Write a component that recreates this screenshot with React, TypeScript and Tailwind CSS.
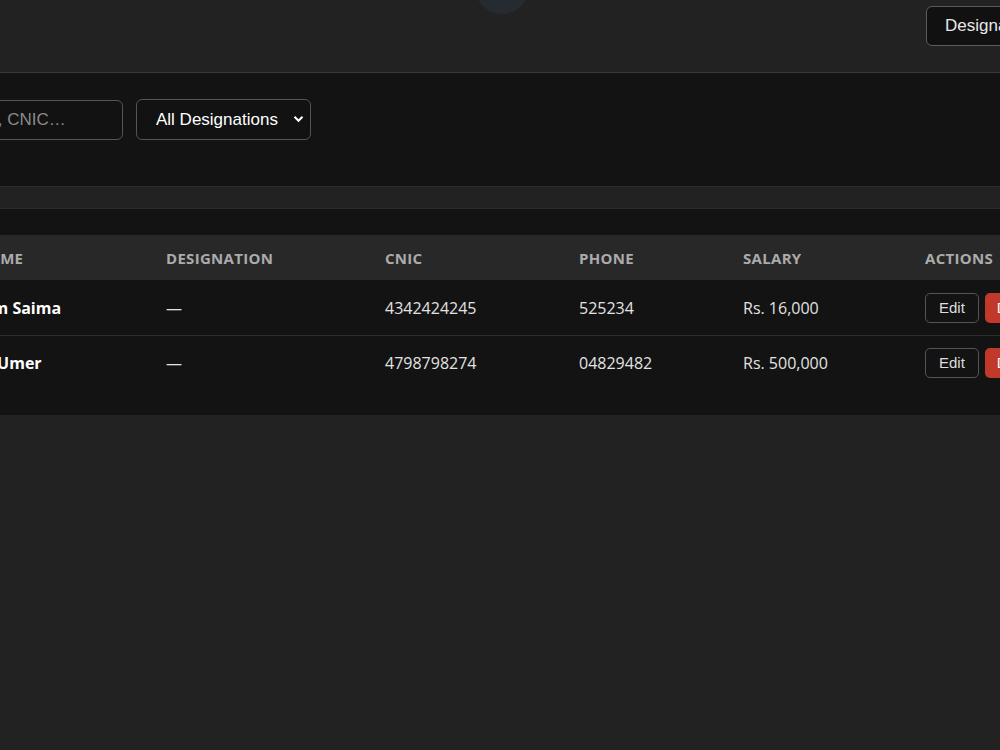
import React from 'react';

interface Employee {
  id: number;
  name: string;
  designation: string;
  cnic: string;
  phone: string;
  salary: number;
}

const employees: Employee[] = [
  { id: 1, name: 'Kim Saima', designation: '', cnic: '4342424245', phone: '525234', salary: 16000 },
  { id: 2, name: 'Al Umer', designation: '', cnic: '4798798274', phone: '04829482', salary: 500000 },
];

const columns = ['Name', 'Designation', 'CNIC', 'Phone', 'Salary', 'Actions'];

function formatSalary(n: number) {
  return 'Rs. ' + n.toLocaleString('en-US');
}

export default function App() {
  return (
    <div className="min-h-[750px] w-full overflow-hidden bg-[#222222] font-['Open_Sans',sans-serif]">
      {/* top bar */}
      <header className="relative flex h-[73px] items-start justify-end border-b border-[#383838] pt-[6px]">
        <div className="absolute left-[475px] top-[-40px] h-[54px] w-[54px] rounded-full bg-[#262a31]" />
        <button className="-mr-[74px] h-[40px] w-[148px] shrink-0 rounded-[6px] border border-[#5c5c5c] bg-[#111111] text-left pl-[18px] font-['Liberation_Sans',Arial,sans-serif] text-[17px] text-[#e8e8e8]">
          Designations
        </button>
      </header>

      {/* filters */}
      <section className="h-[114px] border-b border-[#2b2b2b] bg-[#131313] pt-[26px]">
        <div className="-ml-[137px] flex items-center gap-[13px] font-['Liberation_Sans',Arial,sans-serif]">
          <input
            className="h-[40px] w-[260px] rounded-[6px] border border-[#555555] bg-[#121212] pl-[10px] pr-[18px] text-[17px] text-[#e8e8e8] placeholder:text-[#8a8a8a] outline-none"
            placeholder="Search by name, CNIC…"
          />
          <div className="relative">
            <select className="h-[41px] w-[175px] appearance-none rounded-[6px] border border-[#555555] bg-[#121212] pl-[19px] text-[17px] text-white outline-none">
              <option>All Designations</option>
            </select>
            <svg
              className="pointer-events-none absolute right-[7px] top-[16px]"
              width="11"
              height="8"
              viewBox="0 0 11 8"
              fill="none"
            >
              <path d="M1.5 1.8 5.5 5.8 9.5 1.8" stroke="#ffffff" strokeWidth="2" />
            </svg>
          </div>
        </div>
      </section>

      {/* table card */}
      <section className="mt-[21px] border-t border-[#2b2b2b] bg-[#131313] pt-[26px] pb-[25px]">
        <table className="-ml-[39px] w-[1110px] table-fixed border-collapse">
          <colgroup>
            <col className="w-[189px]" />
            <col className="w-[219px]" />
            <col className="w-[194px]" />
            <col className="w-[164px]" />
            <col className="w-[182px]" />
            <col className="w-[162px]" />
          </colgroup>
          <thead>
            <tr className="h-[45px] bg-[#282828]">
              {columns.map((c) => (
                <th
                  key={c}
                  className="px-[16px] pt-[1px] text-left text-[15px] font-bold uppercase tracking-[0.02em] text-[#ababab]"
                >
                  {c}
                </th>
              ))}
            </tr>
          </thead>
          <tbody>
            {employees.map((e, i) => (
              <tr
                key={e.id}
                className={`h-[55px] text-[16px] text-[#e2e2e2] ${i === 0 ? 'border-b border-[#2c2c2c]' : ''}`}
              >
                <td className="px-[16px] pt-[1px] font-bold text-white">{e.name}</td>
                <td className="px-[16px] pt-[1px]">{e.designation || '—'}</td>
                <td className="px-[16px] pt-[1px]">{e.cnic}</td>
                <td className="px-[16px] pt-[1px]">{e.phone}</td>
                <td className="px-[16px] pt-[1px]">{formatSalary(e.salary)}</td>
                <td className="px-[16px] pt-[1px]">
                  <div className="flex items-center gap-[6px] font-['Liberation_Sans',Arial,sans-serif]">
                    <button className="h-[30px] rounded-[5px] border border-[#555555] px-[13px] text-[15px] text-[#dddddd]">
                      Edit
                    </button>
                    <button className="h-[30px] rounded-[5px] bg-[#c0392b] px-[12px] text-[15px] text-white">
                      Delete
                    </button>
                  </div>
                </td>
              </tr>
            ))}
          </tbody>
        </table>
      </section>
    </div>
  );
}
